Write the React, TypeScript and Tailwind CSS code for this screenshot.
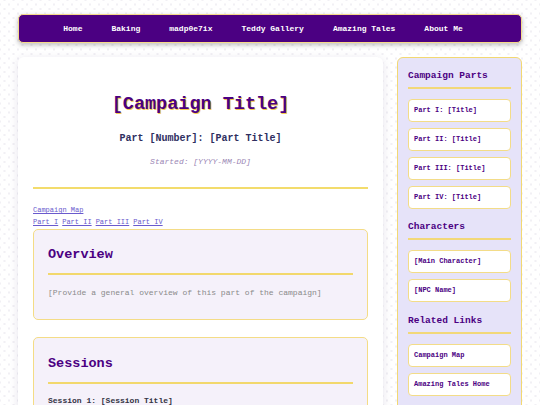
import React from 'react';

const navItems = ['Home', 'Baking', 'madp0e7ix', 'Teddy Gallery', 'Amazing Tales', 'About Me'];

const SideItem: React.FC<{ label: string }> = ({ label }) => (
  <div className="h-[23px] mb-[6px] flex items-center px-[5px] bg-white border border-[#f3dc88] rounded-[4px] text-[7px] font-bold text-[#4b0082]">
    {label}
  </div>
);

const SideHeading: React.FC<{ title: string }> = ({ title }) => (
  <div className="mb-[10px]">
    <h3 className="text-[9.5px] leading-[13px] font-bold text-[#4b0082] pb-[5px]">{title}</h3>
    <div className="h-[2px] bg-[#f2d878]" />
  </div>
);

const App: React.FC = () => {
  return (
    <div
      className="min-h-screen w-[540px] h-[405px] overflow-hidden bg-[#e7e5ee] bg-[radial-gradient(circle,#ffffff_3.3px,transparent_4.3px),radial-gradient(circle,#ffffff_3.3px,transparent_4.3px)] bg-[length:9px_9px] bg-[position:0_0,4.5px_4.5px] pt-[14px] px-[18px]"
      style={{ fontFamily: '"Liberation Mono", "Courier New", monospace' }}
    >
      {/* Nav */}
      <nav className="h-[29px] bg-[#4b0082] border border-[#f5d98a] rounded-[5px] shadow-[0_2px_5px_rgba(0,0,0,0.25)] flex items-center justify-center gap-[29px] pr-[14px] text-[8px] font-bold text-white">
        {navItems.map((n) => (
          <span key={n}>{n}</span>
        ))}
      </nav>

      <div className="flex gap-[14px] mt-[14px]">
        {/* Main card */}
        <main className="w-[365px] h-[400px] bg-white rounded-[6px] shadow-[0_2px_8px_rgba(80,60,120,0.15)] px-[15px] pt-[37px]">
          <h1 className="text-center text-[18.5px] leading-[22px] font-bold text-[#4b0082] [text-shadow:1px_1px_0_#f2c94c]">
            [Campaign Title]
          </h1>
          <h2 className="text-center text-[10px] leading-[14px] font-bold text-[#2f2f5f] mt-[16px]">
            Part [Number]: [Part Title]
          </h2>
          <p className="text-center text-[8px] leading-[12px] italic text-[#9b87b5] mt-[10px]">Started: [YYYY-MM-DD]</p>
          <div className="mt-[19px] h-[2px] bg-[#f3dc6c]" />

          <div className="mt-[15px] text-[7px] leading-[12px] text-[#6a5acd]">
            <a href="#" className="underline">Campaign Map</a>
            <div className="flex gap-[4px]">
              <a href="#" className="underline">Part I</a>
              <a href="#" className="underline">Part II</a>
              <a href="#" className="underline">Part III</a>
              <a href="#" className="underline">Part IV</a>
            </div>
          </div>

          <section className="mt-[1px] h-[91px] bg-[#f5f1fa] border border-[#f4dc86] rounded-[5px] px-[14px] pt-[16px]">
            <h2 className="text-[13.5px] leading-[18px] font-bold text-[#4b0082]">Overview</h2>
            <div className="mt-[9px] h-[1.5px] bg-[#f2d86c]" />
            <p className="mt-[12px] text-[8px] leading-[12px] text-[#8a8a8a]">
              [Provide a general overview of this part of the campaign]
            </p>
          </section>

          <section className="mt-[17px] h-[120px] bg-[#f5f1fa] border border-[#f4dc86] rounded-[5px] px-[14px] pt-[17px]">
            <h2 className="text-[13.5px] leading-[18px] font-bold text-[#4b0082]">Sessions</h2>
            <div className="mt-[9px] h-[1.5px] bg-[#f2d86c]" />
            <p className="mt-[11px] text-[8px] leading-[12px] font-bold text-[#333344]">Session 1: [Session Title]</p>
          </section>
        </main>

        {/* Sidebar */}
        <aside className="w-[125px] h-[400px] bg-[#e6e3f9] border border-[#f2d872] rounded-[6px] px-[10px] pt-[11px]">
          <SideHeading title="Campaign Parts" />
          <SideItem label="Part I: [Title]" />
          <SideItem label="Part II: [Title]" />
          <SideItem label="Part III: [Title]" />
          <SideItem label="Part IV: [Title]" />

          <div className="mt-[11px]">
            <SideHeading title="Characters" />
          </div>
          <SideItem label="[Main Character]" />
          <SideItem label="[NPC Name]" />

          <div className="mt-[12px]">
            <SideHeading title="Related Links" />
          </div>
          <SideItem label="Campaign Map" />
          <SideItem label="Amazing Tales Home" />
        </aside>
      </div>
    </div>
  );
};

export default App;
